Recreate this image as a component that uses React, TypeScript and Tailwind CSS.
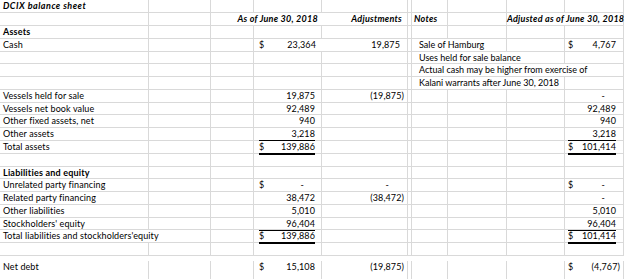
import type { ReactNode } from "react";

type Money = { v: string; dollar?: boolean; line?: "single" | "double" };

type Spec = {
  label?: string;
  bold?: boolean;
  labelSpan?: number;
  d?: Money;
  e?: Money;
  note?: string;
  noteSpan?: number;
  j?: Money;
  openD?: boolean;
  h?: string;
};

const span: Record<number, string> = { 1: "", 2: "col-span-2", 3: "col-span-3", 4: "col-span-4" };

const grid =
  "grid grid-cols-[149px_62px_43px_68px_86px_4px_36px_59px_58px_59px] border-b border-[#d9d9d9] leading-[12px]";

function Cell({ n = 1, open, className = "", children }: { n?: number; open?: boolean; className?: string; children?: ReactNode }) {
  return (
    <div className={`relative whitespace-nowrap ${span[n]} ${open ? "" : "border-r border-[#d9d9d9]"} ${className}`}>
      {children}
    </div>
  );
}

// accounting-format figure: "$" pinned left, value right, optional single/double underline
function Amount({ m, col }: { m?: Money; col: "d" | "e" | "j" }) {
  if (!m) return null;
  const neg = m.v.startsWith("(");
  const dash = m.v === "-";
  const box = {
    d: neg ? "left-[5px] right-[2px]" : "left-[5px] right-[6px]",
    e: neg ? "left-[5px] right-[3px]" : "left-[5px] right-[7px]",
    j: neg ? "left-[3px] right-[3px]" : "left-[3px] right-[7px]",
  }[col];
  const line =
    m.line === "single"
      ? "border-b border-black bottom-[-1px]"
      : m.line === "double"
        ? "border-b-2 border-black bottom-[-2px]"
        : "bottom-0";
  return (
    <div className={`absolute top-0 flex justify-between ${box} ${line}`}>
      <span>{m.dollar ? "$" : ""}</span>
      <span className={dash ? "pr-[11px]" : ""}>{m.v}</span>
    </div>
  );
}

function Row({ s }: { s: Spec }) {
  const ls = s.labelSpan ?? 1;
  const ns = s.noteSpan ?? 1;
  const tail = 3 - Math.max(0, ns - 1); // cells left among H, I, J
  return (
    <div className={`${grid} ${s.h ?? "h-[13px]"}`}>
      <Cell n={ls} className={`pl-[3px] ${s.bold ? "font-bold tracking-[0.2px]" : ""}`}>
        {s.label}
      </Cell>
      {ls < 2 && <Cell />}
      <Cell />
      <Cell open={s.openD}>
        <Amount m={s.d} col="d" />
      </Cell>
      <Cell>
        <Amount m={s.e} col="e" />
      </Cell>
      <Cell />
      <Cell n={ns} className="pl-[7px] tracking-normal">
        {s.note}
      </Cell>
      {tail >= 3 && <Cell />}
      {tail >= 2 && <Cell />}
      {tail >= 1 && (
        <Cell>
          <Amount m={s.j} col="j" />
        </Cell>
      )}
    </div>
  );
}

const rows: Spec[] = [
  { label: "Assets", bold: true },
  { label: "Cash", d: { v: "23,364", dollar: true }, e: { v: "19,875" }, note: "Sale of Hamburg", noteSpan: 2, j: { v: "4,767", dollar: true }, openD: true },
  { note: "Uses held for sale balance", noteSpan: 3, h: "h-[12px]" },
  { note: "Actual cash may be higher from exercise of", noteSpan: 4 },
  { note: "Kalani warrants after June 30, 2018", noteSpan: 3 },
  { label: "Vessels held for sale", d: { v: "19,875" }, e: { v: "(19,875)" }, j: { v: "-" } },
  { label: "Vessels net book value", d: { v: "92,489" }, j: { v: "92,489" }, h: "h-[12px]" },
  { label: "Other fixed assets, net", d: { v: "940" }, j: { v: "940" } },
  { label: "Other assets", d: { v: "3,218", line: "single" }, j: { v: "3,218", line: "single" } },
  { label: "Total assets", d: { v: "139,886", dollar: true, line: "double" }, j: { v: "101,414", dollar: true, line: "double" } },
  {},
  { label: "Liabilities and equity", bold: true, h: "h-[12px]" },
  { label: "Unrelated party financing", d: { v: "-", dollar: true }, e: { v: "-" }, j: { v: "-", dollar: true } },
  { label: "Related party financing", d: { v: "38,472" }, e: { v: "(38,472)" }, j: { v: "-" } },
  { label: "Other liabilities", d: { v: "5,010" }, j: { v: "5,010" } },
  { label: "Stockholders' equity", d: { v: "96,404", line: "single" }, j: { v: "96,404", line: "single" }, h: "h-[12px]" },
  {
    label: "Total liabilities and stockholders'equity",
    labelSpan: 2,
    d: { v: "139,886", dollar: true, line: "double" },
    j: { v: "101,414", dollar: true, line: "double" },
  },
  {},
];

export default function App() {
  return (
    <div className="w-[624px] h-[279px] overflow-hidden bg-white text-[9px] text-black tracking-[0.1px] font-['Lato',sans-serif]">
      <div className={`${grid} h-[13px]`}>
        <Cell className="pl-[3px] font-bold italic tracking-[0.5px]">DCIX balance sheet</Cell>
        <Cell />
        <Cell />
        <Cell />
        <Cell />
        <Cell />
        <Cell />
        <Cell />
        <Cell />
        <Cell />
      </div>
      <div className={`${grid} h-[13px] font-bold italic tracking-[0.25px]`}>
        <Cell />
        <Cell />
        <Cell n={2} open className="text-right pr-[4px]">
          As of June 30, 2018
        </Cell>
        <Cell className="text-right pr-[5px]">Adjustments</Cell>
        <Cell />
        <Cell className="pl-[2px]">Notes</Cell>
        <Cell />
        <Cell n={2} className="text-right pr-[4px]">
          Adjusted as of June 30, 2018
        </Cell>
      </div>
      {rows.map((s, i) => (
        <Row key={i} s={s} />
      ))}
      <div className="grid grid-cols-[149px_62px_43px_68px_86px_4px_36px_59px_58px_59px] h-[30px] leading-[12px] pt-[5px]">
        <Cell className="pl-[3px]">Net debt</Cell>
        <Cell />
        <Cell />
        <Cell>
          <Amount m={{ v: "15,108", dollar: true }} col="d" />
        </Cell>
        <Cell>
          <Amount m={{ v: "(19,875)" }} col="e" />
        </Cell>
        <Cell />
        <Cell />
        <Cell />
        <Cell />
        <Cell>
          <Amount m={{ v: "(4,767)", dollar: true }} col="j" />
        </Cell>
      </div>
    </div>
  );
}
